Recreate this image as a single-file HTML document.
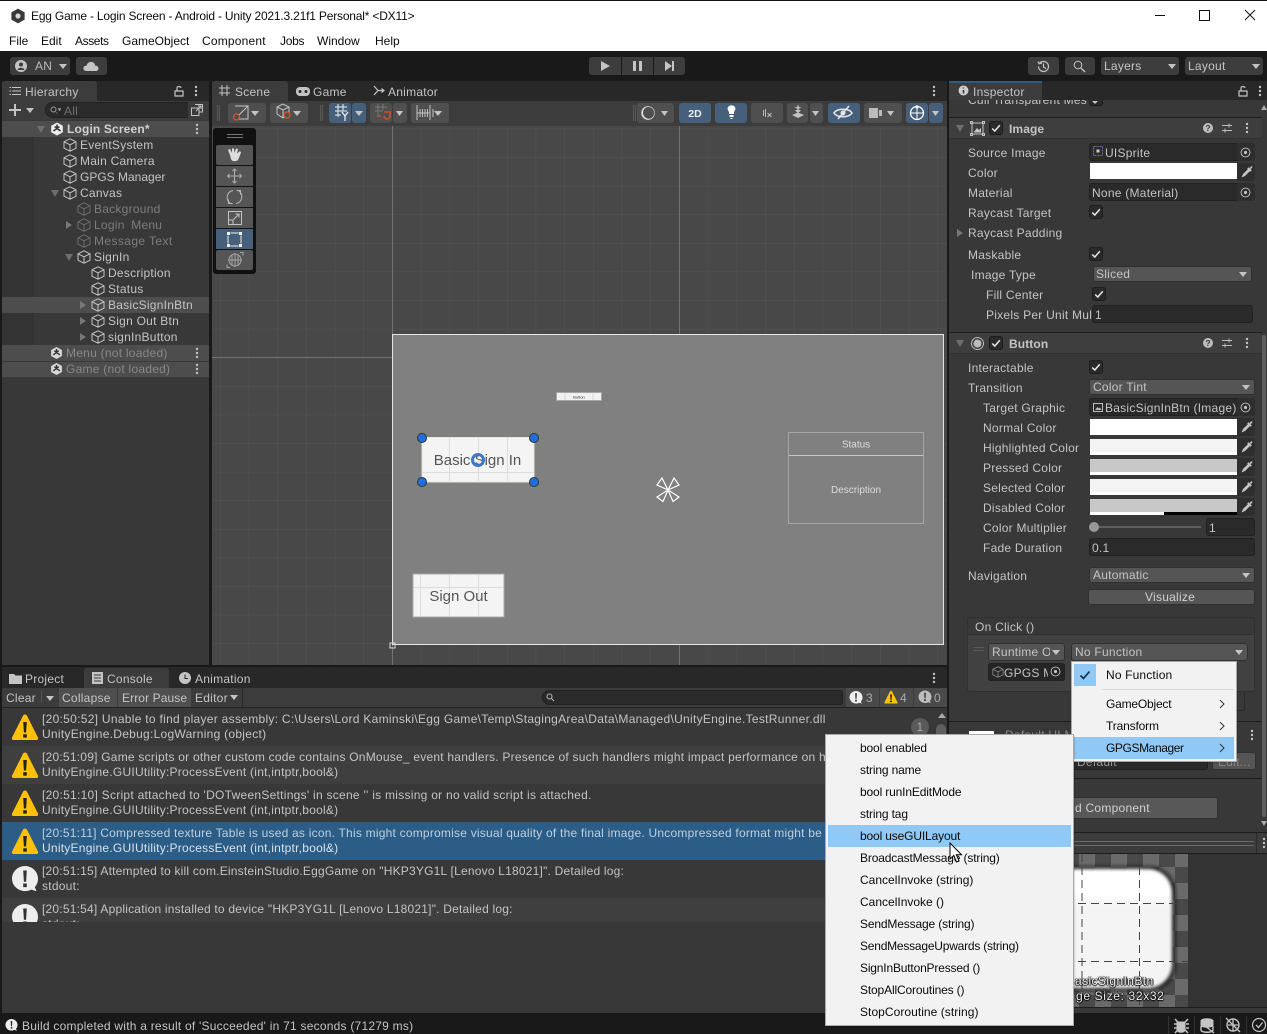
<!DOCTYPE html>
<html><head><meta charset="utf-8"><style>
html,body{margin:0;padding:0;width:1267px;height:1034px;overflow:hidden;background:#191919}
body{position:relative;font:12px/16px "Liberation Sans",sans-serif;color:#c4c4c4;letter-spacing:.25px}
svg text{letter-spacing:0}
div,span,svg.i{position:absolute}
span{white-space:nowrap}
.k{color:#0a0a0a;letter-spacing:-.15px}
.m{letter-spacing:0}
.d{color:#7d7d7d}
.b{background:#4f4f4f;border-radius:3px}
.u{background:#46607c;border-radius:3px}
.f{background:#2a2a2a;border-radius:3px;box-shadow:inset 0 0 0 1px #212121}
.s{background:#555;border-radius:3px;box-shadow:inset 0 0 0 1px #303030}
.c{background:#2a2a2a;border-radius:3px;width:14px;height:14px;box-shadow:inset 0 0 0 1px #1d1d1d}
.a{width:0;height:0;border-left:4px solid transparent;border-right:4px solid transparent;border-top:5px solid #c4c4c4}
.r{width:0;height:0;border-top:4px solid transparent;border-bottom:4px solid transparent;border-left:6px solid #777}
.w{width:0;height:0;border-left:4px solid transparent;border-right:4px solid transparent;border-top:7px solid #6e6e6e}
.sw{left:1090px;width:147px;height:16px;background:#fff}
.e{left:1237px;width:18px;height:18px;background:#2e2e2e;border-radius:0 3px 3px 0}
</style></head><body>
<svg width="0" height="0" style="position:absolute"><defs>
<symbol id="cube" viewBox="0 0 14 14"><path d="M7 .8 13 3.8V10.2L7 13.2 1 10.2V3.8ZM1 3.8 7 6.8 13 3.8M7 6.8V13.2" fill="none" stroke="currentColor" stroke-width="1"/></symbol>
<symbol id="logo" viewBox="0 0 14 14"><path d="M7 .5 12.8 3.8V10.2L7 13.5 1.2 10.2V3.8Z" fill="currentColor"/><path d="M7 2.5V6.5L3.4 9M7 6.5 10.6 9M4.5 4.6 7 6M9.5 4.6 7 6" fill="none" stroke="#333" stroke-width="1.5"/></symbol>
<symbol id="chk" viewBox="0 0 14 14"><path d="M3.2 7.5 5.8 10 10.8 4.2" fill="none" stroke="#e8e8e8" stroke-width="1.5"/></symbol>
<symbol id="pick" viewBox="0 0 14 14"><circle cx="7" cy="7" r="4.8" fill="none" stroke="#c4c4c4"/><circle cx="7" cy="7" r="1.7" fill="#c4c4c4"/></symbol>
<symbol id="drop" viewBox="0 0 14 14"><path d="M1.5 12.5 3 9 8 4l2 2-5 5ZM8.5 2.2l3.3 3.3-1.3 1.3-3.3-3.3ZM9.5 3l1.7-1.6c.6-.5 1.3 0 1.3.6l-1.6 2.4Z" fill="#c4c4c4"/></symbol>
<symbol id="warn" viewBox="0 0 28 28"><path d="M14 1.5C15 1.5 15.6 2 16 2.8L27 24.6C27.5 25.8 26.8 27 25.5 27H2.5C1.2 27 .5 25.8 1 24.6L12 2.8C12.4 2 13 1.5 14 1.5Z" fill="#ffc107"/><path d="M12.2 9h3.6l-.7 10.5h-2.2ZM12.2 21.2h3.6v3.4h-3.6Z" fill="#222"/></symbol>
<symbol id="info" viewBox="0 0 28 28"><path d="M14 1C21 1 27 6.6 27 13.6c0 3.5-1.2 6.3-3.2 8.5l1.8 4.2-5.4-1.7c-1.9 1-4 1.5-6.2 1.5C7 26.1 1 20.5 1 13.6S7 1 14 1Z" fill="#eee"/><path d="M12.2 5.5h3.6l-.7 11.2h-2.2ZM12.2 18.5h3.6v3.6h-3.6Z" fill="#333"/></symbol>
<symbol id="keb" viewBox="0 0 4 12"><circle cx="2" cy="2" r="1.2" fill="#c4c4c4"/><circle cx="2" cy="6" r="1.2" fill="#c4c4c4"/><circle cx="2" cy="10" r="1.2" fill="#c4c4c4"/></symbol>
<symbol id="help" viewBox="0 0 12 12"><circle cx="6" cy="6" r="5" fill="#bdbdbd"/><text x="6" y="9" font-size="8.5" font-weight="bold" text-anchor="middle" fill="#383838" font-family="Liberation Sans">?</text></symbol>
<symbol id="pre" viewBox="0 0 12 12"><path d="M1 3.5H11M1 8.5H11M8 1.5V5.5M4 6.5V10.5" stroke="#bdbdbd" fill="none"/></symbol>
<symbol id="lock" viewBox="0 0 10 12"><path d="M1 6H9V11H1ZM3 6V3.2C3 1 7 1 7 3" fill="none" stroke="#c4c4c4" stroke-width="1.2"/></symbol>
<pattern id="grid" x="220" y="128.6" width="28.7" height="28.6" patternUnits="userSpaceOnUse"><path d="M0 0H28.7M0 0V28.6" stroke="#535353" fill="none"/></pattern>
<pattern id="chkr" x="1175" y="851" width="32" height="32" patternUnits="userSpaceOnUse"><rect width="32" height="32" fill="#494949"/><path d="M0 0h16v16H0ZM16 16h16v16H16Z" fill="#6a6a6a"/></pattern>
<linearGradient id="pv" x1="0" y1="0" x2="0" y2="1"><stop offset="0" stop-color="#fff"/><stop offset=".2" stop-color="#fff"/><stop offset=".32" stop-color="#f4f4f4"/><stop offset="1" stop-color="#f4f4f4"/></linearGradient>
<filter id="bl" x="-10%" y="-10%" width="120%" height="120%"><feGaussianBlur stdDeviation="1.6"/></filter>
</defs></svg>

<!-- title & menu -->
<div style="left:0;top:0;width:1267px;height:51px;background:#fff;border-top:1px solid #111;box-sizing:border-box"></div>
<svg class="i" style="left:10px;top:8px" width="16" height="16"><use href="#logo" color="#3a3a3a" width="16" height="16"/><circle cx="8" cy="8" r="2.6" fill="#fff" opacity=".8"/></svg>
<span class="k" style="left:31px;top:8px;letter-spacing:-.19px">Egg Game - Login Screen - Android - Unity 2021.3.21f1 Personal* &lt;DX11&gt;</span>
<span class="k m" style="left:9px;top:33px">File</span><span class="k m" style="left:41px;top:33px">Edit</span><span class="k m" style="left:75px;top:33px;letter-spacing:-.4px">Assets</span><span class="k m" style="left:122px;top:33px">GameObject</span><span class="k m" style="left:202px;top:33px;letter-spacing:.2px">Component</span><span class="k m" style="left:280px;top:33px;letter-spacing:-.3px">Jobs</span><span class="k m" style="left:317px;top:33px">Window</span><span class="k m" style="left:375px;top:33px">Help</span>
<svg class="i" style="left:1150px;top:8px" width="110" height="14"><path d="M5 7.5H15M49.500 2.500H59.500V12.500H49.500ZM95 2 105 12M105 2 95 12" stroke="#111" fill="none"/></svg>

<!-- main toolbar -->
<div class="b" style="left:10px;top:57px;width:60px;height:18px;background:#3d3d3d"></div>
<svg class="i" style="left:15px;top:60px" width="12" height="12"><circle cx="6" cy="6" r="6" fill="#c4c4c4"/><circle cx="6" cy="4.5" r="2" fill="#3d3d3d"/><path d="M2.5 10c.5-3 6.5-3 7 0" fill="#3d3d3d"/></svg>
<span style="left:35px;top:58px;color:#bbb">AN</span><div class="a" style="left:59px;top:64px"></div>
<div class="b" style="left:76px;top:57px;width:31px;height:18px;background:#3d3d3d"></div>
<svg class="i" style="left:83px;top:60px" width="16" height="12"><path d="M3.5 11C1 11 0 9 .5 7.5 1 6 2.500 5.500 3.500 5.800 4 3 6.500 1.500 9 2c2 .5 3 2 3 3.500 2 0 3.500 1.500 3.500 3S14 11 13 11Z" fill="#c4c4c4"/></svg>
<div class="b" style="left:589px;top:57px;width:32px;height:18px;background:#3d3d3d;border-radius:3px 0 0 3px"></div>
<div style="left:622px;top:57px;width:31px;height:18px;background:#3d3d3d"></div>
<div style="left:654px;top:57px;width:31px;height:18px;background:#3d3d3d;border-radius:0 3px 3px 0"></div>
<svg class="i" style="left:600px;top:60px" width="76" height="12"><path d="M1 1 10 6 1 11ZM33 1h3v10h-3ZM39 1h3v10h-3ZM65 1 72 6 65 11ZM72 1h2v10h-2Z" fill="#c4c4c4"/></svg>
<div class="b" style="left:1028px;top:57px;width:31px;height:18px;background:#3d3d3d"></div>
<svg class="i" style="left:1037px;top:60px" width="13" height="13"><path d="M2.500 3.500A5 5 0 1 1 1.500 6.500M.8 1.500 2.300 3.800 4.800 3M6.500 3.500V7L9 8.500" fill="none" stroke="#c4c4c4" stroke-width="1.200"/></svg>
<div class="b" style="left:1065px;top:57px;width:30px;height:18px;background:#3d3d3d"></div>
<svg class="i" style="left:1073px;top:60px" width="13" height="13"><circle cx="5" cy="5" r="3.800" fill="none" stroke="#c4c4c4"/><path d="M8 8 12 12" stroke="#c4c4c4" stroke-width="1.300"/></svg>
<div class="b" style="left:1101px;top:57px;width:78px;height:18px;background:#3d3d3d"></div><span style="left:1104px;top:58px">Layers</span><div class="a" style="left:1168px;top:64px"></div>
<div class="b" style="left:1185px;top:57px;width:78px;height:18px;background:#3d3d3d"></div><span style="left:1188px;top:58px">Layout</span><div class="a" style="left:1252px;top:64px"></div>

<!-- hierarchy -->
<div style="left:2px;top:81px;width:207px;height:584px;background:#383838"></div>
<div style="left:2px;top:81px;width:207px;height:20px;background:#282828"></div>
<div style="left:2px;top:81px;width:95px;height:20px;background:#3c3c3c;border-radius:3px 3px 0 0"></div>
<svg class="i" style="left:9px;top:86px" width="12" height="10"><path d="M3 1.500H12M3 5H12M3 8.500H12M.5 1.500H2M.5 5H2M.5 8.500H2" stroke="#c4c4c4"/></svg>
<span style="left:25px;top:84px">Hierarchy</span>
<svg class="i" style="left:174px;top:85px" width="10" height="12"><use href="#lock"/></svg>
<svg class="i" style="left:194px;top:85px" width="4" height="12"><use href="#keb"/></svg>
<div style="left:2px;top:101px;width:207px;height:19px;background:#3c3c3c"></div>
<svg class="i" style="left:9px;top:104px" width="26" height="12"><path d="M6 0V12M0 6H12" stroke="#c4c4c4" stroke-width="2"/><path d="M17 4h8l-4 5Z" fill="#c4c4c4"/></svg>
<div class="f" style="left:45px;top:102px;width:160px;height:16px;border-radius:8px 3px 3px 8px"></div>
<svg class="i" style="left:50px;top:106px" width="11" height="9"><circle cx="3.500" cy="3.500" r="2.500" fill="none" stroke="#999"/><path d="M5.500 5.500 7.500 8M8 2.500h3L9.500 5Z" fill="#999" stroke="#999" stroke-width=".5"/></svg>
<span class="d" style="left:64px;top:103px;color:#6e6e6e">All</span>
<div style="left:188px;top:102px;width:17px;height:16px;background:#3c3c3c"></div>
<svg class="i" style="left:191px;top:104px" width="12" height="12"><path d="M4 .5H11.500V8H8M.5 4H8V11.500H.500ZM5 7 10 2M7 2h3V5" fill="none" stroke="#c4c4c4"/></svg>
<div style="left:2px;top:121px;width:207px;height:16px;background:#4d4d4d"></div>
<div style="left:2px;top:137px;width:32px;height:208px;background:#333"></div>
<div style="left:2px;top:297px;width:207px;height:16px;background:#4d4d4d"></div>
<div style="left:2px;top:345px;width:207px;height:32px;background:#4d4d4d"></div>
<div style="left:2px;top:361px;width:207px;height:1px;background:#383838"></div>
<div class="w" style="left:37px;top:126px"></div>
<svg class="i" style="left:50px;top:122px" width="14" height="14"><use href="#logo" color="#eee"/></svg>
<span style="left:67px;top:121px;font-weight:bold;color:#d2d2d2;letter-spacing:.15px">Login Screen*</span>
<svg class="i" style="left:195px;top:123px" width="4" height="12"><use href="#keb"/></svg>

<svg class="i" style="left:63px;top:138px;color:#c4c4c4" width="14" height="14"><use href="#cube"/></svg><span style="left:80px;top:137px">EventSystem</span>
<svg class="i" style="left:63px;top:154px;color:#c4c4c4" width="14" height="14"><use href="#cube"/></svg><span style="left:80px;top:153px">Main Camera</span>
<svg class="i" style="left:63px;top:170px;color:#c4c4c4" width="14" height="14"><use href="#cube"/></svg><span style="left:80px;top:169px;letter-spacing:0">GPGS Manager</span>
<div class="w" style="left:51px;top:190px"></div>
<svg class="i" style="left:63px;top:186px;color:#c4c4c4" width="14" height="14"><use href="#cube"/></svg><span style="left:80px;top:185px">Canvas</span>
<svg class="i" style="left:77px;top:202px;color:#6c6c6c" width="14" height="14"><use href="#cube"/></svg><span class="d" style="left:94px;top:201px">Background</span>
<div class="r" style="left:66px;top:221px"></div>
<svg class="i" style="left:77px;top:218px;color:#6c6c6c" width="14" height="14"><use href="#cube"/></svg><span class="d" style="left:94px;top:217px;word-spacing:3px">Login Menu</span>
<svg class="i" style="left:77px;top:234px;color:#6c6c6c" width="14" height="14"><use href="#cube"/></svg><span class="d" style="left:94px;top:233px;letter-spacing:.4px">Message Text</span>
<div class="w" style="left:65px;top:254px"></div>
<svg class="i" style="left:77px;top:250px;color:#c4c4c4" width="14" height="14"><use href="#cube"/></svg><span style="left:94px;top:249px">SignIn</span>
<svg class="i" style="left:91px;top:266px;color:#c4c4c4" width="14" height="14"><use href="#cube"/></svg><span style="left:108px;top:265px">Description</span>
<svg class="i" style="left:91px;top:282px;color:#c4c4c4" width="14" height="14"><use href="#cube"/></svg><span style="left:108px;top:281px">Status</span>
<div class="r" style="left:80px;top:301px"></div>
<svg class="i" style="left:91px;top:298px;color:#c4c4c4" width="14" height="14"><use href="#cube"/></svg><span style="left:108px;top:297px">BasicSignInBtn</span>
<div class="r" style="left:80px;top:317px"></div>
<svg class="i" style="left:91px;top:314px;color:#c4c4c4" width="14" height="14"><use href="#cube"/></svg><span style="left:108px;top:313px">Sign Out Btn</span>
<div class="r" style="left:80px;top:333px"></div>
<svg class="i" style="left:91px;top:330px;color:#c4c4c4" width="14" height="14"><use href="#cube"/></svg><span style="left:108px;top:329px">signInButton</span>
<svg class="i" style="left:50px;top:346px" width="13" height="14"><use href="#logo" color="#d8d8d8"/></svg><span style="left:66px;top:345px;color:#888">Menu (not loaded)</span><svg class="i" style="left:195px;top:347px" width="4" height="12"><use href="#keb"/></svg>
<svg class="i" style="left:50px;top:362px" width="13" height="14"><use href="#logo" color="#d8d8d8"/></svg><span style="left:66px;top:361px;color:#888">Game (not loaded)</span><svg class="i" style="left:195px;top:363px" width="4" height="12"><use href="#keb"/></svg>

<!-- scene -->
<div style="left:212px;top:81px;width:735px;height:20px;background:#282828"></div>
<div style="left:212px;top:81px;width:76px;height:20px;background:#3c3c3c;border-radius:3px 3px 0 0"></div>
<svg class="i" style="left:219px;top:85px" width="11" height="11"><path d="M3 0V11M8 0V11M0 3H11M0 8H11" stroke="#c4c4c4"/></svg>
<span style="left:235px;top:84px">Scene</span>
<svg class="i" style="left:296px;top:87px" width="14" height="9"><rect x="0" y="0" width="14" height="9" rx="4" fill="#c4c4c4"/><circle cx="4" cy="4.500" r="1.500" fill="#282828"/><circle cx="10" cy="4.500" r="1.500" fill="#282828"/></svg>
<span style="left:313px;top:84px">Game</span>
<svg class="i" style="left:373px;top:85px" width="12" height="11"><path d="M1 1 5 5.500 1 10M5 5.500H11M8.500 3.500 11 5.500 8.500 7.500" stroke="#c4c4c4" fill="none" stroke-width="1.200"/></svg>
<span style="left:388px;top:84px">Animator</span>
<svg class="i" style="left:932px;top:85px" width="4" height="12"><use href="#keb"/></svg>
<div style="left:212px;top:101px;width:735px;height:25px;background:#3c3c3c"></div>
<svg class="i" style="left:212px;top:101px" width="735" height="24">
<g fill="#4f4f4f"><rect x="16" y="2" width="38" height="20" rx="3"/><rect x="58" y="2" width="38" height="20" rx="3"/><rect x="158" y="2" width="22" height="20" rx="3"/><rect x="181" y="2" width="14" height="20" rx="3"/><rect x="199" y="2" width="38" height="20" rx="3"/><rect x="425" y="2" width="37" height="20" rx="3"/><rect x="539" y="2" width="32" height="20" rx="3"/><rect x="575" y="2" width="21" height="20" rx="3"/><rect x="598" y="2" width="13" height="20" rx="3"/><rect x="652" y="2" width="38" height="20" rx="3"/></g>
<g fill="#46607c"><rect x="117" y="2" width="22" height="20" rx="3"/><rect x="140" y="2" width="14" height="20" rx="3"/><rect x="467" y="2" width="32" height="20" rx="3"/><rect x="503" y="2" width="32" height="20" rx="3"/><rect x="616" y="2" width="32" height="20" rx="3"/><rect x="694" y="2" width="22" height="20" rx="3"/><rect x="717" y="2" width="14" height="20" rx="3"/></g>
<path d="M5.500 4V20M7.500 4V20M108.500 4V20M110.500 4V20M421.500 4V20M423.500 4V20" stroke="#5b5b5b"/>
<g fill="#c4c4c4"><path d="M39 10h8l-4 5ZM81 10h8l-4 5ZM143 10h8l-4 5ZM184 10h7l-3.500 5ZM222 10h8l-4 5ZM449 10h7l-3.500 5ZM600 10h7l-3.500 5ZM675 10h7l-3.500 5ZM720 10h7l-3.500 5Z"/></g>
<path d="M23 5h13v13h-13M23 18 36 5" fill="none" stroke="#c4c4c4"/><circle cx="24.500" cy="16" r="3" fill="#4f4f4f" stroke="#e0572c" stroke-width="1.200"/>
<path d="M65 6 71 3 77 6V13L71 17 65 13ZM65 6 71 9 77 6M71 9V17" fill="none" stroke="#c4c4c4"/><circle cx="75" cy="14" r="3" fill="#4f4f4f" stroke="#e0572c" stroke-width="1.200"/>
<path d="M123 6H135M123 10H135M123 14H129M126 3V16M131 3V10" stroke="#eee" fill="none"/><path d="M130 11 133 15V20M136 11 133 15" stroke="#eee" fill="none" stroke-width="1.300"/>
<path d="M163 6H175M163 10H171M166 3V14M171 3V9" stroke="#777" fill="none"/><path d="M172 11H178V15A3 3 0 0 1 172 15M165 15H169" fill="none" stroke="#c8552f" stroke-width="1.500"/>
<path d="M205 4V19M218 4V19M208 8V16M210.500 8V16M213 8V16M215.500 8V16M205 12H218M221 8V16" stroke="#c4c4c4" fill="none"/>
<circle cx="436" cy="12" r="6.500" fill="none" stroke="#aaa"/><path d="M438 5.800A6.500 6.500 0 1 0 442 15 6 6 0 1 1 438 5.800Z" fill="#e0e0e0"/>
<text x="483" y="16" font-size="10.500" font-weight="bold" text-anchor="middle" fill="#eee" font-family="Liberation Sans">2D</text>
<path d="M515 5a4.500 4.500 0 0 1 7 0c1 1.500 0 3.500-1 5v2h-5v-2c-1-1.500-2-3.500-1-5ZM516.500 13h4v2h-4ZM517.500 16h2v1h-2Z" fill="#fff" transform="translate(1 1)"/>
<path d="M551 9h1v6h-1ZM553 8h1v8h-1Z" fill="#bbb"/><path d="M555.500 12l4 4M559.500 12l-4 4" stroke="#bbb" fill="none"/>
<path d="M580 14 586 11.500 592 14 586 17ZM583 9.500 586 8.500 589 9.500 586 12ZM586 3.500 587 6 589.500 6.500 587 7.500 586 9 585 7.500 582.500 6.500 585 6Z" fill="#c4c4c4"/>
<path d="M622 12C625 7 637 7 640 12 637 17 625 17 622 12ZM626 18 637 5" fill="none" stroke="#e8e8e8" stroke-width="1.500"/><circle cx="631" cy="12" r="2.500" fill="#e8e8e8"/>
<path d="M657 7h9v10h-9ZM667 9h3v6h-3Z" fill="#bbb"/>
<circle cx="705" cy="12" r="6.500" fill="none" stroke="#fff" stroke-width="1.300"/><path d="M698 12H712M705 5V19" stroke="#fff"/><circle cx="705" cy="6" r="1.600" fill="#fff"/>
</svg>

<svg class="i" style="left:212px;top:126px" width="735" height="539" viewBox="212 126 735 539">
<rect x="212" y="126" width="735" height="539" fill="#484848"/>
<rect x="212" y="126" width="735" height="539" fill="url(#grid)"/>
<path d="M392.500 126V334M679.500 126V334M212 357.500H392M392.500 645V665M679.500 645V665" stroke="#737373"/>
<rect x="392.500" y="334.500" width="551" height="310" fill="#808080" stroke="#e5e5e5"/>
<rect x="390" y="643" width="5" height="5" fill="none" stroke="#ddd"/>
<rect x="556.500" y="392.500" width="45" height="8" fill="#f2f2f2" stroke="#a5a5a5"/>
<path d="M565 393V400M593 393V400" stroke="#d8d8d8"/>
<text x="579" y="398.500" font-size="4" text-anchor="middle" fill="#333" font-family="Liberation Sans">Button</text>
<rect x="422" y="437.500" width="112" height="44.500" fill="#f4f4f4" stroke="#dfe8da" stroke-width="1"/>
<path d="M449.500 438V481M478.500 438V481M507.500 438V481M422 472.500H534" stroke="#dcdcdc"/>
<text x="477.500" y="465" font-size="15" text-anchor="middle" fill="#555" font-family="Liberation Sans">Basic Sign In</text>
<circle cx="478" cy="460" r="5.500" fill="none" stroke="#3d79c6" stroke-width="3"/>
<path d="M475 459 480 461" stroke="#eee"/>
<g fill="#1e6fe0" stroke="#333"><circle cx="422" cy="438" r="4.500"/><circle cx="534" cy="438" r="4.500"/><circle cx="422" cy="482" r="4.500"/><circle cx="534" cy="482" r="4.500"/></g>
<rect x="413" y="574" width="91" height="43" fill="#f4f4f4" stroke="#a8a8a8"/>
<path d="M420.500 575V616M449.500 575V616M478.500 575V616M414 587.500H503" stroke="#dcdcdc"/>
<text x="458.500" y="601" font-size="15" text-anchor="middle" fill="#555" font-family="Liberation Sans">Sign Out</text>
<rect x="788.500" y="432.500" width="135" height="91" fill="none" stroke="#a6a6a6"/>
<path d="M789 455.500H923" stroke="#c8c8c8"/>
<text x="856" y="447.500" font-size="10" text-anchor="middle" fill="#ddd" font-family="Liberation Sans">Status</text>
<text x="856" y="493" font-size="10" text-anchor="middle" fill="#ddd" font-family="Liberation Sans">Description</text>
<path d="M668 490 657 485 662 478ZM668 490 679 485 674 478ZM668 490 657 497 663 501.500ZM668 490 679 497 673 501.500Z" fill="none" stroke="#fff" stroke-width="1.200"/>
<rect x="213" y="128" width="43" height="146" rx="3" fill="#111"/>
<path d="M227 134.500H243M227 137.500H243" stroke="#777"/>
<g fill="#555"><rect x="216" y="145" width="37" height="20" rx="2"/><rect x="216" y="166" width="37" height="20"/><rect x="216" y="187" width="37" height="20"/><rect x="216" y="208" width="37" height="20"/><rect x="216" y="250" width="37" height="20" rx="2"/></g>
<rect x="216" y="229" width="37" height="20" fill="#46607c"/>
<path d="M230 155 228 150 230 149 232 153V148.500L234 148.500 234.500 153 236 148.500 238 149 237 153.500 240 151 241 152.500 238.500 159C237 162 232 162 231 159Z" fill="#ddd"/>
<path d="M234.500 169V183M227.500 176H241.500M232.500 171 234.500 169 236.500 171M232.500 181 234.500 183 236.500 181M229.500 174 227.500 176 229.500 178M239.500 174 241.500 176 239.500 178" fill="none" stroke="#b0b0b0"/>
<path d="M233 190.500A7 7 0 0 0 230 203M228.500 199.500V203.500H232.500M236 203.500A7 7 0 0 0 239 191M240.500 194.500V190.500H236.500" fill="none" stroke="#b8b8b8"/>
<path d="M228.500 211.500H241.500V224.500H228.500ZM228.500 220H233V224.500M233.500 219.500 239 214M235.500 214H239V217.500" fill="none" stroke="#c4c4c4"/>
<path d="M230.500 233H238.500M241 235.500V243.500M238.500 246H230.500M228 243.500V235.500" stroke="#eee" stroke-width="1"/><g fill="#eee"><rect x="227" y="232" width="3" height="3"/><rect x="239" y="232" width="3" height="3"/><rect x="227" y="244" width="3" height="3"/><rect x="239" y="244" width="3" height="3"/></g>
<circle cx="235" cy="260" r="6" fill="none" stroke="#a8a8a8"/><path d="M228 260H242M235 253V267M232 254.500V265.500M238 254.500V265.500M240 252.500 243 252.500 243 255.500M230 267.500 227 267.500 227 264.500" stroke="#a8a8a8" fill="none"/>
</svg>

<!-- inspector -->
<div style="left:949px;top:81px;width:318px;height:932px;background:#383838"></div>
<div style="left:949px;top:81px;width:318px;height:19px;background:#282828"></div>
<div style="left:949px;top:81px;width:93px;height:19px;background:#3c3c3c"></div>
<div style="left:949px;top:81px;width:93px;height:2px;background:#2c5d87"></div>
<svg class="i" style="left:958px;top:85px" width="11" height="11"><circle cx="5.500" cy="5.500" r="5" fill="#ccc"/><path d="M5.500 2.500v1M5.500 5v3.500" stroke="#333" stroke-width="1.500"/></svg>
<span style="left:973px;top:84px">Inspector</span>
<svg class="i" style="left:1238px;top:85px" width="10" height="12"><use href="#lock"/></svg>
<svg class="i" style="left:1258px;top:85px" width="4" height="12"><use href="#keb"/></svg>
<div style="left:949px;top:100px;width:318px;height:6px;overflow:hidden"><span style="left:19px;top:-8px">Cull Transparent Mes</span><div class="c" style="left:140px;top:-4px;height:10px"></div><div class="a" style="left:143px;top:1px;border-top-width:3px;border-left-width:3px;border-right-width:3px"></div></div>

<div style="left:949px;top:117px;width:313px;height:1px;background:#1d1d1d"></div>
<div style="left:949px;top:118px;width:313px;height:20px;background:#3e3e3e;border-bottom:1px solid #303030"></div>
<div class="w" style="left:956px;top:125px"></div>
<svg class="i" style="left:970px;top:121px" width="15" height="15"><path d="M2 2H13V13H2ZM.500 .500h2v2h-2ZM12.500 .500h2v2h-2ZM.500 12.500h2v2h-2ZM12.500 12.500h2v2h-2Z" fill="none" stroke="#c4c4c4"/><path d="M3.500 11.500 7 7l2 2 2-2v4.500Z" fill="#c4c4c4"/></svg>
<div class="c" style="left:989px;top:121px"></div><svg class="i" style="left:989px;top:121px" width="14" height="14"><use href="#chk"/></svg>
<span style="left:1009px;top:121px;font-weight:bold;letter-spacing:.1px">Image</span>
<svg class="i" style="left:1202px;top:122px" width="12" height="12"><use href="#help"/></svg><svg class="i" style="left:1221px;top:122px" width="12" height="12"><use href="#pre"/></svg><svg class="i" style="left:1245px;top:122px" width="4" height="12"><use href="#keb"/></svg>

<span style="left:968px;top:145px">Source Image</span>
<div class="f" style="left:1089px;top:143px;width:166px;height:18px"></div>
<svg class="i" style="left:1093px;top:146px" width="10" height="10"><rect x=".5" y=".5" width="9" height="9" fill="none" stroke="#7a66b8" stroke-dasharray="2 1"/><rect x="3.500" y="3.500" width="3" height="3" fill="#ccc"/></svg>
<span style="left:1105px;top:145px">UISprite</span>
<div class="e" style="top:143px"></div><svg class="i" style="left:1239px;top:146px" width="13" height="13"><use href="#pick"/></svg>
<span style="left:968px;top:165px">Color</span>
<div class="sw" style="top:163px"></div><div class="e" style="top:163px"></div><svg class="i" style="left:1240px;top:165px" width="14" height="14"><use href="#drop"/></svg>
<span style="left:968px;top:185px">Material</span>
<div class="f" style="left:1089px;top:183px;width:166px;height:18px"></div><span style="left:1092px;top:185px">None (Material)</span><div class="e" style="top:183px"></div><svg class="i" style="left:1239px;top:186px" width="13" height="13"><use href="#pick"/></svg>
<span style="left:968px;top:205px">Raycast Target</span>
<div class="c" style="left:1089px;top:205px"></div><svg class="i" style="left:1089px;top:205px" width="14" height="14"><use href="#chk"/></svg>
<div class="r" style="left:957px;top:229px"></div><span style="left:968px;top:225px">Raycast Padding</span>
<span style="left:968px;top:247px">Maskable</span>
<div class="c" style="left:1089px;top:247px"></div><svg class="i" style="left:1089px;top:247px" width="14" height="14"><use href="#chk"/></svg>
<span style="left:971px;top:267px">Image Type</span>
<div class="s" style="left:1093px;top:266px;width:159px;height:16px"></div><span style="left:1096px;top:266px">Sliced</span><div class="a" style="left:1239px;top:272px"></div>
<span style="left:986px;top:287px">Fill Center</span>
<div class="c" style="left:1092px;top:287px"></div><svg class="i" style="left:1092px;top:287px" width="14" height="14"><use href="#chk"/></svg>
<span style="left:986px;top:307px">Pixels Per Unit Mul</span>
<div class="f" style="left:1092px;top:305px;width:161px;height:18px"></div><span style="left:1095px;top:307px">1</span>

<div style="left:949px;top:332px;width:313px;height:1px;background:#1d1d1d"></div>
<div style="left:949px;top:333px;width:313px;height:20px;background:#3e3e3e;border-bottom:1px solid #303030"></div>
<div class="w" style="left:956px;top:340px"></div>
<svg class="i" style="left:971px;top:337px" width="13" height="13"><circle cx="6.500" cy="6.500" r="6" fill="none" stroke="#bbb"/><circle cx="6.500" cy="6.500" r="4" fill="#bbb"/></svg>
<div class="c" style="left:989px;top:336px"></div><svg class="i" style="left:989px;top:336px" width="14" height="14"><use href="#chk"/></svg>
<span style="left:1009px;top:336px;font-weight:bold;letter-spacing:.1px">Button</span>
<svg class="i" style="left:1202px;top:337px" width="12" height="12"><use href="#help"/></svg><svg class="i" style="left:1221px;top:337px" width="12" height="12"><use href="#pre"/></svg><svg class="i" style="left:1245px;top:337px" width="4" height="12"><use href="#keb"/></svg>

<span style="left:968px;top:360px">Interactable</span>
<div class="c" style="left:1089px;top:360px"></div><svg class="i" style="left:1089px;top:360px" width="14" height="14"><use href="#chk"/></svg>
<span style="left:968px;top:380px">Transition</span>
<div class="s" style="left:1089px;top:379px;width:166px;height:16px"></div><span style="left:1093px;top:379px">Color Tint</span><div class="a" style="left:1242px;top:385px"></div>
<span style="left:983px;top:400px">Target Graphic</span>
<div class="f" style="left:1089px;top:398px;width:166px;height:18px"></div>
<svg class="i" style="left:1093px;top:403px" width="10" height="9"><path d="M.5.500h9v8h-9Z" fill="none" stroke="#bbb"/><path d="M2 7 4.500 4 6 5.500 7 4.500 8.500 7Z" fill="#bbb"/></svg>
<span style="left:1105px;top:400px">BasicSignInBtn (Image)</span><div class="e" style="top:398px"></div><svg class="i" style="left:1239px;top:401px" width="13" height="13"><use href="#pick"/></svg>
<span style="left:983px;top:420px">Normal Color</span>
<div class="sw" style="top:419px"></div><div class="e" style="top:418px"></div><svg class="i" style="left:1240px;top:420px" width="14" height="14"><use href="#drop"/></svg>
<span style="left:983px;top:440px">Highlighted Color</span>
<div class="sw" style="top:439px"></div><div class="sw" style="top:439px;height:13px;background:#f4f4f4"></div><div class="e" style="top:438px"></div><svg class="i" style="left:1240px;top:440px" width="14" height="14"><use href="#drop"/></svg>
<span style="left:983px;top:460px">Pressed Color</span>
<div class="sw" style="top:459px"></div><div class="sw" style="top:459px;height:13px;background:#c8c8c8"></div><div class="e" style="top:458px"></div><svg class="i" style="left:1240px;top:460px" width="14" height="14"><use href="#drop"/></svg>
<span style="left:983px;top:480px">Selected Color</span>
<div class="sw" style="top:479px"></div><div class="sw" style="top:479px;height:13px;background:#f4f4f4"></div><div class="e" style="top:478px"></div><svg class="i" style="left:1240px;top:480px" width="14" height="14"><use href="#drop"/></svg>
<span style="left:983px;top:500px">Disabled Color</span>
<div class="sw" style="top:499px"></div><div class="sw" style="top:499px;height:13px;background:#c8c8c8"></div><div style="left:1164px;top:512px;width:73px;height:3px;background:#000"></div><div class="e" style="top:498px"></div><svg class="i" style="left:1240px;top:500px" width="14" height="14"><use href="#drop"/></svg>
<span style="left:983px;top:520px">Color Multiplier</span>
<div style="left:1094px;top:526px;width:107px;height:2px;background:#5f5f5f"></div><div style="left:1089px;top:522px;width:10px;height:10px;border-radius:5px;background:#999"></div>
<div class="f" style="left:1206px;top:518px;width:49px;height:18px"></div><span style="left:1209px;top:520px">1</span>
<span style="left:983px;top:540px">Fade Duration</span>
<div class="f" style="left:1089px;top:538px;width:166px;height:18px"></div><span style="left:1092px;top:540px">0.1</span>
<span style="left:968px;top:568px">Navigation</span>
<div class="s" style="left:1089px;top:567px;width:166px;height:16px"></div><span style="left:1093px;top:567px">Automatic</span><div class="a" style="left:1242px;top:573px"></div>
<div class="s" style="left:1088px;top:589px;width:167px;height:16px;text-align:center"></div><span style="left:1145px;top:589px;color:#d0d0d0">Visualize</span>

<div style="left:967px;top:617px;width:288px;height:75px;background:#414141;border-radius:3px;box-shadow:inset 0 0 0 1px #303030"></div>
<div style="left:967px;top:617px;width:288px;height:18px;background:#383838;border-radius:3px 3px 0 0;box-shadow:inset 0 0 0 1px #303030"></div>
<span style="left:975px;top:619px">On Click ()</span>
<svg class="i" style="left:973px;top:647px" width="11" height="5"><path d="M0 .5H11M0 3.500H11" stroke="#5a5a5a"/></svg>
<div class="s" style="left:988px;top:643px;width:77px;height:18px"></div><span style="left:992px;top:644px;width:58px;overflow:hidden">Runtime O</span><div class="a" style="left:1052px;top:650px"></div>
<div class="s" style="left:1071px;top:643px;width:177px;height:18px"></div><span style="left:1075px;top:644px">No Function</span><div class="a" style="left:1235px;top:650px"></div>
<div class="f" style="left:988px;top:663px;width:77px;height:18px;background:#252525"></div>
<svg class="i" style="left:992px;top:666px;color:#8a8a8a" width="12" height="12"><use href="#cube"/></svg><span style="left:1004px;top:665px;width:44px;overflow:hidden">GPGS M</span><svg class="i" style="left:1049px;top:665px" width="13" height="13"><use href="#pick"/></svg>
<div style="left:1200px;top:692px;width:45px;height:19px;background:#383838;border:1px solid #2a2a2a;border-top:0;box-sizing:border-box;border-radius:0 0 3px 3px"></div>
<div style="left:949px;top:721px;width:313px;height:1px;background:#1d1d1d"></div>
<div style="left:949px;top:722px;width:313px;height:45px;background:#383838"></div>
<div style="left:969px;top:731px;width:25px;height:25px;background:#fff"></div>
<span style="left:1005px;top:727px;color:#8a8a8a">Default UI Material</span>
<div style="left:1205px;top:730px;width:10px;height:10px;border-radius:5px;background:#aaa"></div>
<svg class="i" style="left:1250px;top:729px" width="4" height="12"><use href="#keb"/></svg>
<div class="f" style="left:960px;top:752px;width:248px;height:18px"></div><span style="left:1077px;top:754px;color:#9a9a9a">Default</span>
<div class="s" style="left:1212px;top:752px;width:44px;height:18px"></div><span style="left:1218px;top:754px;color:#888">Edit...</span>
<div style="left:949px;top:778px;width:313px;height:1px;background:#1d1d1d"></div>
<div class="s" style="left:960px;top:797px;width:258px;height:22px;background:#585858"></div>
<span style="left:1075px;top:800px;color:#d0d0d0">d Component</span>
<div style="left:949px;top:832px;width:318px;height:1px;background:#1d1d1d"></div>
<div style="left:949px;top:833px;width:318px;height:20px;background:#3c3c3c"></div>
<div style="left:1010px;top:841px;width:244px;height:1px;background:#6a6a6a"></div><div style="left:1010px;top:845px;width:244px;height:1px;background:#6a6a6a"></div>
<svg class="i" style="left:1262px;top:837px" width="4" height="12"><use href="#keb"/></svg>
<div style="left:1256px;top:833px;width:1px;height:20px;background:#2a2a2a"></div>
<div style="left:949px;top:853px;width:318px;height:1px;background:#1d1d1d"></div>
<div style="left:949px;top:854px;width:318px;height:153px;background:#333"></div>
<svg class="i" style="left:1000px;top:854px" width="188" height="153" viewBox="1000 854 188 153">
<rect x="1000" y="854" width="188" height="153" fill="url(#chkr)"/>
<rect x="1000" y="866" width="176" height="125" rx="26" fill="#111" opacity=".65" filter="url(#bl)"/>
<rect x="1000" y="869" width="172" height="119" rx="24" fill="url(#pv)" filter="url(#bl)"/>
<path d="M1082 854V1007M1139.500 854V1007M1000 903.500H1188M1000 961.500H1188" stroke="#444" stroke-dasharray="8 5" fill="none"/>
</svg>
<span style="left:1075px;top:973px;color:#eee;letter-spacing:.4px;text-shadow:0 1px 1px #000,1px 0 1px #000,-1px 0 1px #000">asicSignInBtn</span>
<span style="left:1076px;top:988px;color:#eee;letter-spacing:.65px;text-shadow:0 1px 1px #000,1px 0 1px #000,-1px 0 1px #000">ge Size: 32x32</span>
<div style="left:949px;top:1007px;width:318px;height:1px;background:#1d1d1d"></div>
<div style="left:949px;top:1008px;width:318px;height:5px;background:#383838"></div>
<div style="left:1262px;top:335px;width:4px;height:482px;background:#5f5f5f;border-radius:2px"></div>
<svg class="i" style="left:1261px;top:104px" width="6" height="724"><path d="M0 6 3 1 6 6ZM0 717H6L3 722Z" fill="#aaa"/></svg>

<!-- console -->
<div style="left:2px;top:667px;width:945px;height:346px;background:#383838"></div>
<div style="left:2px;top:667px;width:945px;height:21px;background:#282828"></div>
<div style="left:84px;top:668px;width:85px;height:20px;background:#3c3c3c;border-radius:3px 3px 0 0"></div>
<svg class="i" style="left:9px;top:673px" width="13" height="11"><path d="M0 1h5l1.500 1.500H13V11H0Z" fill="#c4c4c4"/></svg><span style="left:25px;top:671px">Project</span>
<svg class="i" style="left:92px;top:672px" width="11" height="12"><rect width="11" height="12" fill="#c4c4c4"/><path d="M2 3H9M2 6H9M2 9H9" stroke="#3c3c3c"/></svg><span style="left:107px;top:671px">Console</span>
<svg class="i" style="left:179px;top:672px" width="12" height="12"><circle cx="6" cy="6" r="6" fill="#c4c4c4"/><path d="M6 2.500V6.500H9" stroke="#282828" fill="none"/></svg><span style="left:195px;top:671px">Animation</span>
<svg class="i" style="left:932px;top:672px" width="4" height="12"><use href="#keb"/></svg>
<div style="left:2px;top:688px;width:945px;height:20px;background:#3c3c3c;border-bottom:1px solid #232323;box-sizing:border-box"></div>
<span style="left:6px;top:690px">Clear</span><div style="left:41px;top:691px;width:1px;height:12px;background:#555"></div><div class="a" style="left:46px;top:696px"></div>
<div style="left:59px;top:688px;width:58px;height:19px;background:#4f4f4f"></div><span style="left:62px;top:690px">Collapse</span>
<div style="left:118px;top:688px;width:73px;height:19px;background:#4f4f4f"></div><span style="left:122px;top:690px;letter-spacing:.1px">Error Pause</span>
<div style="left:192px;top:688px;width:50px;height:19px;background:#3c3c3c;box-shadow:1px 0 0 #2a2a2a"></div><span style="left:195px;top:690px">Editor</span><div class="a" style="left:230px;top:695px"></div>
<div class="f" style="left:542px;top:690px;width:301px;height:15px;border-radius:8px 3px 3px 8px"></div>
<svg class="i" style="left:546px;top:693px" width="10" height="9"><circle cx="3.500" cy="3.500" r="2.500" fill="none" stroke="#bbb"/><path d="M5.500 5.500 8 8" stroke="#bbb"/></svg>
<div style="left:846px;top:688px;width:33px;height:19px;background:#4a4a4a"></div>
<div style="left:880px;top:688px;width:33px;height:19px;background:#4a4a4a"></div>
<div style="left:914px;top:688px;width:33px;height:19px;background:#4a4a4a"></div>
<svg class="i" style="left:849px;top:690px" width="14" height="15"><use href="#info" width="14" height="15"/></svg><span style="left:866px;top:690px;color:#aaa">3</span>
<svg class="i" style="left:884px;top:690px" width="14" height="14"><use href="#warn" width="14" height="14"/></svg><span style="left:900px;top:690px;color:#aaa">4</span>
<svg class="i" style="left:918px;top:690px" width="14" height="14"><use href="#info" width="14" height="14" opacity=".7"/></svg><span style="left:934px;top:690px;color:#aaa">0</span>

<div style="left:2px;top:746px;width:940px;height:38px;background:#3f3f3f"></div>
<div style="left:2px;top:822px;width:940px;height:38px;background:#2c5d87"></div>
<div style="left:2px;top:898px;width:940px;height:24px;background:#3f3f3f"></div>
<div style="left:2px;top:922px;width:940px;height:91px;background:#383838"></div>
<svg class="i" style="left:11px;top:713px" width="28" height="28"><use href="#warn"/></svg>
<svg class="i" style="left:11px;top:751px" width="28" height="28"><use href="#warn"/></svg>
<svg class="i" style="left:11px;top:789px" width="28" height="28"><use href="#warn"/></svg>
<svg class="i" style="left:11px;top:827px" width="28" height="28"><use href="#warn"/></svg>
<svg class="i" style="left:11px;top:865px" width="28" height="28"><use href="#info"/></svg>
<div style="left:11px;top:903px;width:28px;height:19px;overflow:hidden"><svg width="28" height="28"><use href="#info"/></svg></div>
<span style="left:42px;top:711px;letter-spacing:.29px">[20:50:52] Unable to find player assembly: C:\Users\Lord Kaminski\Egg Game\Temp\StagingArea\Data\Managed\UnityEngine.TestRunner.dll</span>
<span style="left:42px;top:726px;letter-spacing:.27px">UnityEngine.Debug:LogWarning (object)</span>
<span style="left:42px;top:749px;letter-spacing:.23px">[20:51:09] Game scripts or other custom code contains OnMouse_ event handlers. Presence of such handlers might impact performance on h</span>
<span style="left:42px;top:764px;letter-spacing:.24px">UnityEngine.GUIUtility:ProcessEvent (int,intptr,bool&amp;)</span>
<span style="left:42px;top:787px;letter-spacing:.27px">[20:51:10] Script attached to 'DOTweenSettings' in scene '' is missing or no valid script is attached.</span>
<span style="left:42px;top:802px;letter-spacing:.24px">UnityEngine.GUIUtility:ProcessEvent (int,intptr,bool&amp;)</span>
<span style="left:42px;top:825px;color:#bcd0e0;letter-spacing:.22px">[20:51:11] Compressed texture Table is used as icon. This might compromise visual quality of the final image. Uncompressed format might be</span>
<span style="left:42px;top:840px;color:#d8e2ea;letter-spacing:.24px">UnityEngine.GUIUtility:ProcessEvent (int,intptr,bool&amp;)</span>
<span style="left:42px;top:863px;letter-spacing:.21px">[20:51:15] Attempted to kill com.EinsteinStudio.EggGame on "HKP3YG1L [Lenovo L18021]". Detailed log:</span>
<span style="left:42px;top:878px">stdout:</span>
<span style="left:42px;top:901px;letter-spacing:.21px">[20:51:54] Application installed to device "HKP3YG1L [Lenovo L18021]". Detailed log:</span>
<div style="left:42px;top:916px;width:100px;height:6px;overflow:hidden"><span style="left:0;top:0">stdout:</span></div>
<div style="left:911px;top:718px;width:18px;height:18px;border-radius:9px;background:#5a5a5a;color:#aaa;text-align:center;line-height:19px">1</div>
<svg class="i" style="left:938px;top:713px" width="8" height="6"><path d="M0 5 4 0 8 5Z" fill="#aaa"/></svg>
<div style="left:936px;top:724px;width:10px;height:30px;background:#5f5f5f;border-radius:5px"></div>

<!-- status bar -->
<div style="left:0;top:1013px;width:1267px;height:21px;background:#191919"></div>
<svg class="i" style="left:5px;top:1018px" width="13" height="14"><use href="#info" width="13" height="14"/></svg>
<span style="left:22px;top:1018px;letter-spacing:.23px">Build completed with a result of 'Succeeded' in 71 seconds (71279 ms)</span>
<svg class="i" style="left:1168px;top:1016px" width="99" height="18" fill="none" stroke="#c4c4c4">
<path d="M.5 0V18M26.500 0V18M52.500 0V18M78.500 0V18" stroke="#333"/>
<path d="M9 6h8v8c0 3-8 3-8 0Z" fill="#c4c4c4"/><path d="M7 3 20 17M20 3 7 17M6 8h3M18 8h3M6 12h3M18 12h3" stroke-width="1.500"/>
<path d="M33 5c0-3 12-3 12 0v4c0 3-12 3-12 0Z" fill="#c4c4c4"/><path d="M33 10v4c0 3 12 3 12 0v-4M36 9 46 17" stroke-width="1.400"/>
<circle cx="65" cy="9" r="6" stroke-width="1.400"/><path d="M58 2 72 16M60 9H70M65 3V15" stroke-width="1.300"/>
<circle cx="91" cy="9" r="6.500" stroke-width="1.200"/><path d="M88 9 90.500 11.500 94.500 6.500" stroke-width="1.300"/>
</svg>

<!-- popup 1 -->
<div style="left:1072px;top:662px;width:164px;height:99px;background:#f2f2f2;box-shadow:0 0 0 1px #a9a9a9,1px 1px 2px rgba(0,0,0,.4)"></div>
<div style="left:1074px;top:664px;width:22px;height:22px;background:#90c8f6"></div>
<svg class="i" style="left:1079px;top:669px" width="12" height="12"><path d="M1.500 6.500 4.500 9.500 10.500 2.500" fill="none" stroke="#0a2a44" stroke-width="1.600"/></svg>
<div style="left:1102px;top:689px;width:132px;height:1px;background:#d7d7d7"></div>
<div style="left:1074px;top:737px;width:160px;height:22px;background:#90c8f6"></div>
<span class="k" style="left:1106px;top:667px;letter-spacing:.15px">No Function</span>
<span class="k" style="left:1106px;top:696px;letter-spacing:-.2px">GameObject</span>
<span class="k" style="left:1106px;top:718px">Transform</span>
<span class="k" style="left:1106px;top:740px;letter-spacing:-.4px">GPGSManager</span>
<svg class="i" style="left:1219px;top:700px" width="6" height="54"><path d="M1 0 5 4 1 8M1 22 5 26 1 30M1 44 5 48 1 52" fill="none" stroke="#333"/></svg>

<!-- popup 2 -->
<div style="left:826px;top:735px;width:247px;height:290px;background:#f2f2f2;box-shadow:0 0 0 1px #a9a9a9,1px 1px 2px rgba(0,0,0,.4)"></div>
<div style="left:828px;top:825px;width:243px;height:22px;background:#90c8f6"></div>
<span class="k" style="left:860px;top:740px">bool enabled</span>
<span class="k" style="left:860px;top:762px">string name</span>
<span class="k" style="left:860px;top:784px">bool runInEditMode</span>
<span class="k" style="left:860px;top:806px">string tag</span>
<span class="k" style="left:860px;top:828px">bool useGUILayout</span>
<span class="k" style="left:860px;top:850px">BroadcastMessage (string)</span>
<span class="k" style="left:860px;top:872px;letter-spacing:0">CancelInvoke (string)</span>
<span class="k" style="left:860px;top:894px;letter-spacing:0">CancelInvoke ()</span>
<span class="k" style="left:860px;top:916px">SendMessage (string)</span>
<span class="k" style="left:860px;top:938px;letter-spacing:-.22px">SendMessageUpwards (string)</span>
<span class="k" style="left:860px;top:960px;letter-spacing:-.18px">SignInButtonPressed ()</span>
<span class="k" style="left:860px;top:982px">StopAllCoroutines ()</span>
<span class="k" style="left:860px;top:1004px;letter-spacing:.05px">StopCoroutine (string)</span>
<svg class="i" style="left:948px;top:842px" width="15" height="22"><path d="M2 1V17L5.800 13.500 8.500 20 11 19 8.300 12.800H13.500Z" fill="#fff" stroke="#000"/></svg>
</body></html>
